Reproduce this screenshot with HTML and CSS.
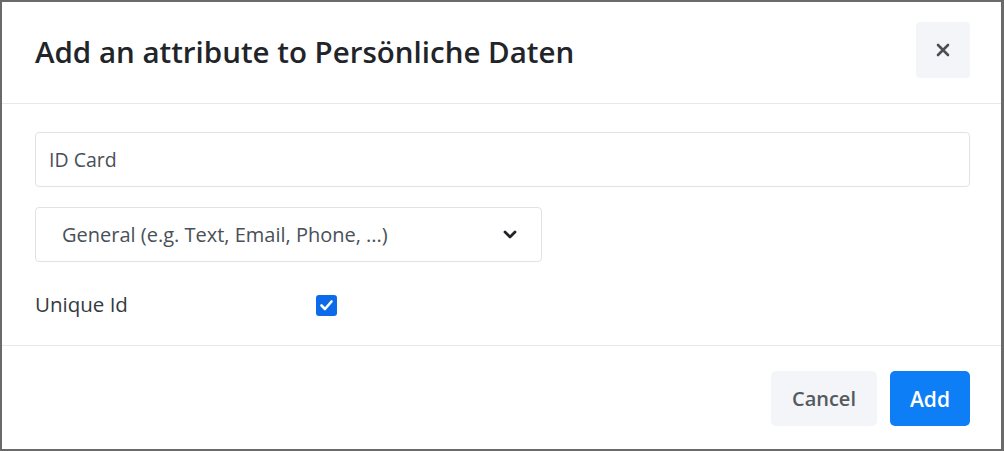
FILE: index.html
```html
<!DOCTYPE html>
<html lang="en">
<head>
    <meta charset="UTF-8">
    <meta name="viewport" content="width=device-width, initial-scale=1.0">
    <title>Add an attribute</title>
    <link rel="stylesheet" href="styles.css">
</head>
<body>
    <div class="modal">
        <header class="modal-header">
            <h1 class="modal-title">Add an attribute to Persönliche Daten</h1>
            <button class="btn-close" type="button" aria-label="Close">
                <svg width="14" height="14" viewBox="0 0 14 14">
                    <path d="M2 2 L12 12 M12 2 L2 12" stroke="#4a4f55" stroke-width="2.6" stroke-linecap="round"/>
                </svg>
            </button>
        </header>

        <div class="modal-body">
            <input class="field" type="text" value="ID Card">

            <div class="select-wrap">
                <div class="select">
                    <span>General (e.g. Text, Email, Phone, ...)</span>
                    <svg width="14" height="10" viewBox="0 0 14 10">
                        <polyline points="2,2 7,7 12,2" fill="none" stroke="#212529" stroke-width="2.8" stroke-linecap="round" stroke-linejoin="round"/>
                    </svg>
                </div>
            </div>

            <div class="check-row">
                <label class="check-label">Unique Id</label>
                <span class="checkbox">
                    <svg width="21" height="21" viewBox="0 0 21 21">
                        <polyline points="5.5,10.5 9,14 15.5,6.5" fill="none" stroke="#fff" stroke-width="2.6" stroke-linecap="round" stroke-linejoin="round"/>
                    </svg>
                </span>
            </div>
        </div>

        <footer class="modal-footer">
            <button class="btn btn-light" type="button">Cancel</button>
            <button class="btn btn-primary" type="button">Add</button>
        </footer>
    </div>
</body>
</html>
```
FILE: styles.css
```css
body {
    margin: 0;
    padding: 0;
    font-family: "Open Sans", "Noto Sans", sans-serif;
    color: #212529;
    background-color: #fff;
}

.modal {
    width: 1004px;
    height: 451px;
    box-sizing: border-box;
    border: 2px solid #6a6a6a;
    border-right-width: 3px;
    display: flex;
    flex-direction: column;
    background-color: #fff;
}

.modal-header {
    display: flex;
    align-items: center;
    justify-content: space-between;
    padding: 20px 31px 25px 33px;
    border-bottom: 1px solid #e6e8eb;
}

.modal-title {
    margin: 0;
    font-size: 29.5px;
    font-weight: 600;
    color: #212529;
    padding-top: 3px;
}

.btn-close {
    width: 54px;
    height: 56px;
    border: none;
    border-radius: 4px;
    background-color: #f3f5f8;
    display: flex;
    align-items: center;
    justify-content: center;
    padding: 0;
}

.modal-body {
    padding: 28px 31px 0 33px;
    height: 213px;
    border-bottom: 1px solid #e6e8eb;
}

.field {
    display: block;
    width: 100%;
    box-sizing: border-box;
    height: 55px;
    border: 1px solid #dfe2e6;
    border-radius: 4px;
    padding: 0 13px;
    font-family: inherit;
    font-size: 19.5px;
    color: #495057;
    outline: none;
}

.select-wrap {
    margin-top: 20px;
}

.select {
    width: 507px;
    height: 55px;
    box-sizing: border-box;
    border: 1px solid #dfe2e6;
    border-radius: 4px;
    display: flex;
    align-items: center;
    justify-content: space-between;
    padding: 0 24px 0 26px;
    font-size: 20px;
    color: #495057;
}

.check-row {
    display: flex;
    align-items: center;
    margin-top: 30px;
}

.check-label {
    width: 281px;
    font-size: 20.5px;
    color: #343a40;
    margin-top: -2px;
}

.checkbox {
    width: 21px;
    height: 21px;
    border-radius: 3px;
    background-color: #0b6be8;
    display: block;
}

.checkbox svg {
    display: block;
}

.modal-footer {
    flex: 1;
    display: flex;
    justify-content: flex-end;
    align-items: flex-start;
    gap: 13px;
    padding: 25px 31px 0 0;
}

.btn {
    height: 55px;
    border: none;
    border-radius: 5px;
    font-family: inherit;
    font-size: 20px;
    font-weight: 600;
    padding: 0 21px;
}

.btn-light {
    background-color: #f3f5f8;
    color: #555a60;
}

.btn-primary {
    background-color: #0d7ef6;
    color: #fff;
    font-size: 21px;
    padding: 0 20px;
}
```
